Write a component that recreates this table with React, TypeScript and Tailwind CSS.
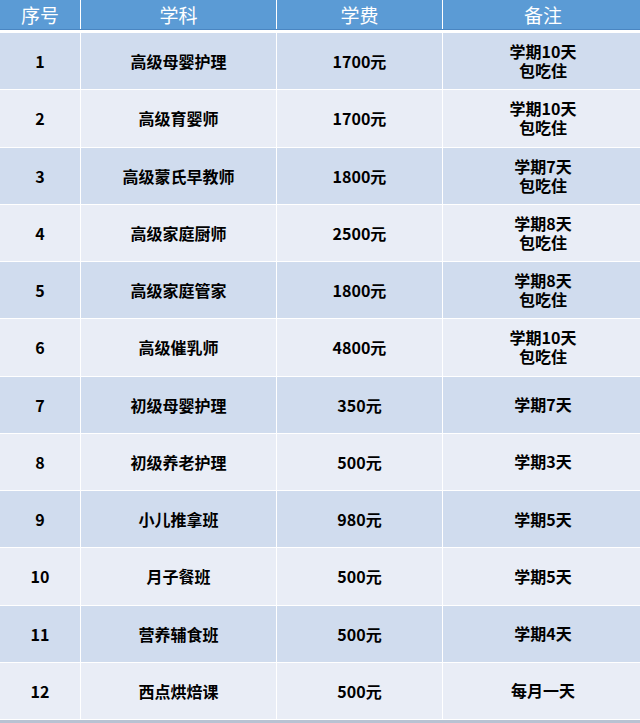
type Course = {
  no: number;
  name: string;
  fee: string;
  note: string[];
};

const courses: Course[] = [
  { no: 1, name: "高级母婴护理", fee: "1700元", note: ["学期10天", "包吃住"] },
  { no: 2, name: "高级育婴师", fee: "1700元", note: ["学期10天", "包吃住"] },
  { no: 3, name: "高级蒙氏早教师", fee: "1800元", note: ["学期7天", "包吃住"] },
  { no: 4, name: "高级家庭厨师", fee: "2500元", note: ["学期8天", "包吃住"] },
  { no: 5, name: "高级家庭管家", fee: "1800元", note: ["学期8天", "包吃住"] },
  { no: 6, name: "高级催乳师", fee: "4800元", note: ["学期10天", "包吃住"] },
  { no: 7, name: "初级母婴护理", fee: "350元", note: ["学期7天"] },
  { no: 8, name: "初级养老护理", fee: "500元", note: ["学期3天"] },
  { no: 9, name: "小儿推拿班", fee: "980元", note: ["学期5天"] },
  { no: 10, name: "月子餐班", fee: "500元", note: ["学期5天"] },
  { no: 11, name: "营养辅食班", fee: "500元", note: ["学期4天"] },
  { no: 12, name: "西点烘焙课", fee: "500元", note: ["每月一天"] },
];

const cols = "grid grid-cols-[80px_195px_165px_200px] gap-x-px";

export default function App() {
  return (
    <div
      className="w-[640px] h-[723px] bg-white overflow-hidden"
      style={{ fontFamily: '"Noto Sans CJK SC", "Noto Sans", sans-serif' }}
    >
      {/* header */}
      <div className={`${cols} h-[30px] border-b border-[#4a86c2]`}>
        {["序号", "学科", "学费", "备注"].map((h) => (
          <div
            key={h}
            className="flex items-center justify-center bg-[#5b9bd5] text-[19px] leading-none text-white"
          >
            {h}
          </div>
        ))}
      </div>
      <div className="h-[3px]" />

      {/* body */}
      <div className="flex flex-col">
        {courses.map((c, i) => {
          const bg = i % 2 === 0 ? "bg-[#d0dcee]" : "bg-[#e9edf6]";
          return (
            <div key={c.no} className={`${cols} h-[57.25px] border-b border-white`}>
              <div className={`${bg} flex items-center justify-center text-[16px] font-bold text-black`}>
                {c.no}
              </div>
              <div className={`${bg} flex items-center justify-center text-[16px] font-bold text-black`}>
                {c.name}
              </div>
              <div className={`${bg} flex items-center justify-center text-[16px] font-bold text-black`}>
                {c.fee}
              </div>
              <div
                className={`${bg} flex flex-col items-center justify-center text-[16px] leading-[19px] font-bold text-black`}
              >
                {c.note.map((n) => (
                  <span key={n}>{n}</span>
                ))}
              </div>
            </div>
          );
        })}
      </div>
      <div className="h-[6px] bg-[#b8c2d2]" />
    </div>
  );
}
